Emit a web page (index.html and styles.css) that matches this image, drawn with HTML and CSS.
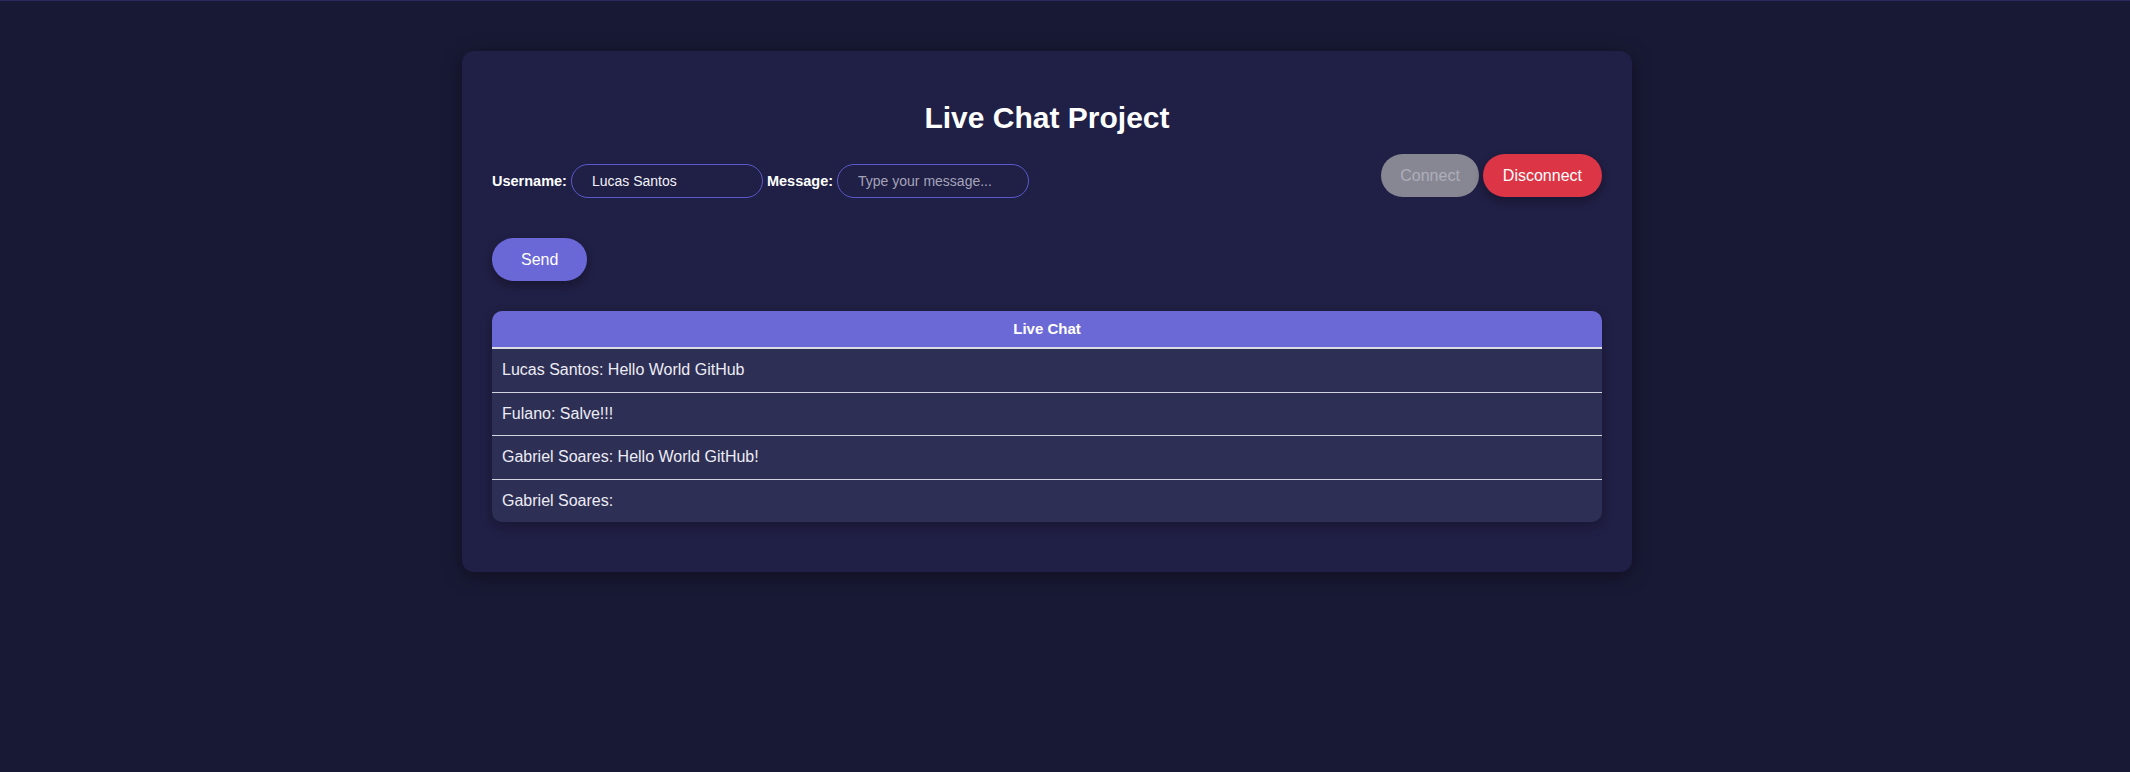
FILE: index.html
```html
<!DOCTYPE html>
<html lang="en">
<head>
<meta charset="utf-8">
<title>Live Chat Project</title>
<link rel="stylesheet" href="styles.css">
</head>
<body>
<div class="topline"></div>
<main class="card">
  <h1 class="title">Live Chat Project</h1>
  <div class="controls">
    <form class="form">
      <div class="fields">
        <label class="label" for="username">Username:</label>
        <input class="input" id="username" type="text" value="Lucas Santos">
        <label class="label" for="message">Message:</label>
        <input class="input" id="message" type="text" placeholder="Type your message...">
      </div>
      <button class="btn btn-send" type="button">Send</button>
    </form>
    <div class="conn">
      <button class="btn btn-connect" type="button" disabled>Connect</button>
      <button class="btn btn-disconnect" type="button">Disconnect</button>
    </div>
  </div>
  <table class="chat">
    <thead>
      <tr><th class="chat-head">Live Chat</th></tr>
    </thead>
    <tbody>
      <tr><td class="chat-cell">Lucas Santos: Hello World GitHub</td></tr>
      <tr><td class="chat-cell">Fulano: Salve!!!</td></tr>
      <tr><td class="chat-cell">Gabriel Soares: Hello World GitHub!</td></tr>
      <tr><td class="chat-cell last">Gabriel Soares:</td></tr>
    </tbody>
  </table>
</main>
</body>
</html>
```

FILE: styles.css
```css
* { box-sizing: border-box; }

html, body {
  margin: 0;
  padding: 0;
  background: #181934;
  min-height: 100%;
}

body {
  font-family: "Liberation Sans", Arial, sans-serif;
  color: #ffffff;
  height: 772px;
  overflow: hidden;
}

.topline {
  height: 1px;
  background: #2a2a5c;
}

.card {
  width: 1170px;
  margin: 50px 0 0 462px;
  padding: 30px;
  background: #201f45;
  border-radius: 12px;
  box-shadow: 0 4px 20px rgba(0, 0, 0, 0.35);
}

.title {
  margin: 19px 0 19px;
  font-size: 30px;
  line-height: 35px;
  font-weight: 700;
  text-align: center;
  color: #ffffff;
}

.controls {
  display: flex;
  justify-content: space-between;
  align-items: flex-start;
}

.form {
  margin: 0;
  display: flex;
  flex-direction: column;
  align-items: flex-start;
}

.fields {
  display: flex;
  align-items: center;
  gap: 4px;
  margin-top: 10px;
}

.label {
  font-size: 14.5px;
  font-weight: 700;
  color: #ffffff;
}

.input {
  width: 192px;
  height: 34px;
  padding: 0 20px;
  border: 1px solid #5b59cb;
  border-radius: 17px;
  background: transparent;
  color: #f2f2f8;
  font-family: "Liberation Sans", Arial, sans-serif;
  font-size: 14px;
  outline: none;
}

.input::placeholder {
  color: #a4a4ba;
}

.btn {
  border: none;
  border-radius: 22px;
  font-family: "Liberation Sans", Arial, sans-serif;
  font-size: 16px;
  line-height: 19px;
  padding: 12px 20px;
  cursor: pointer;
}

.btn-send {
  margin-top: 40px;
  padding: 12px 29px;
  background: #6a67d6;
  color: #ffffff;
  box-shadow: 0 4px 10px rgba(0, 0, 0, 0.3);
}

.conn {
  display: flex;
  gap: 4px;
}

.btn-connect {
  padding: 12px 19px;
  background: #878793;
  color: #aeaeba;
  cursor: default;
}

.btn-disconnect {
  background: #dc3545;
  color: #ffffff;
  box-shadow: 0 4px 10px rgba(0, 0, 0, 0.3);
}

.chat {
  width: 100%;
  margin-top: 30px;
  margin-bottom: 20px;
  border-collapse: separate;
  border-spacing: 0;
  border-radius: 10px;
  overflow: hidden;
  background: #2e2f55;
  box-shadow: 0 4px 12px rgba(0, 0, 0, 0.25);
}

.chat-head {
  background: #6b69d6;
  color: #ffffff;
  font-size: 15px;
  font-weight: 700;
  line-height: 16px;
  padding: 10px;
  text-align: center;
  border-bottom: 2px solid #dcdce4;
}

.chat-cell {
  padding: 12px 10px;
  font-size: 16px;
  line-height: 18.5px;
  color: #ececf4;
  border-bottom: 1px solid #d4d4de;
}

.chat-cell.last {
  border-bottom: none;
}
```
